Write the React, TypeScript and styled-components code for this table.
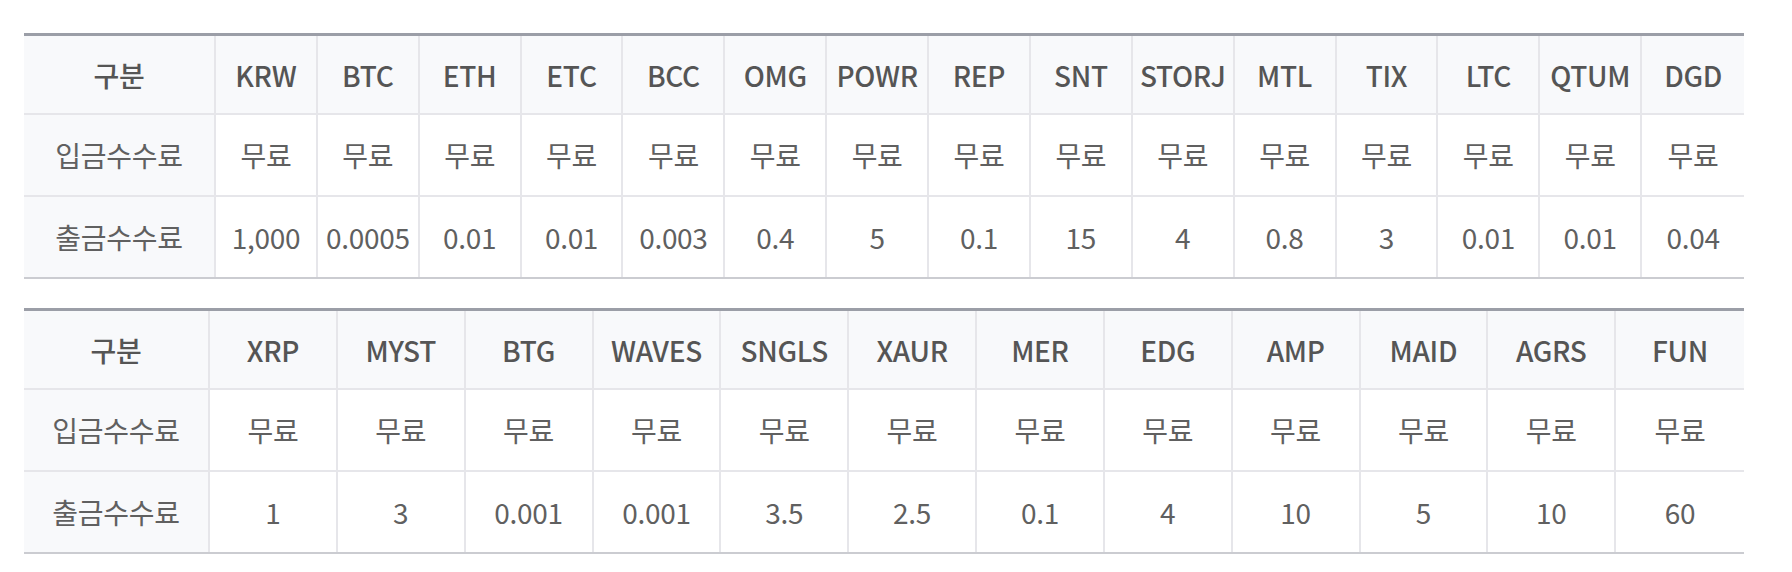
import React from "react";
import styled, { createGlobalStyle } from "styled-components";

const GlobalStyle = createGlobalStyle`
  html, body {
    margin: 0;
    padding: 0;
    background: #ffffff;
  }
  body {
    font-family: "Noto Sans CJK KR", "Noto Sans", sans-serif;
    color: #5e5e5e;
  }
`;

const Page = styled.div`
  display: flex;
  flex-direction: column;
  gap: 29px;
  width: 1720px;
  padding: 33px 0 0 24px;
`;

const Table = styled.div<{ $first: number; $count: number }>`
  display: grid;
  grid-template-columns: ${(p) => p.$first}px repeat(${(p) => p.$count}, 1fr);
  border-top: 3px solid #9b9ea7;
  border-bottom: 2px solid #cbccd1;
`;

const Cell = styled.div<{ $head?: boolean; $label?: boolean; $last?: boolean; $bottom?: boolean }>`
  box-sizing: border-box;
  display: flex;
  align-items: center;
  justify-content: center;
  height: ${(p) => (p.$head ? 79 : p.$bottom ? 80 : 82)}px;
  padding-top: ${(p) => (p.$head ? 1 : 0)}px;
  border-right: ${(p) => (p.$last ? "none" : "2px solid #e6e6ea")};
  border-bottom: ${(p) => (p.$bottom ? "none" : "2px solid #e6e6ea")};
  background: ${(p) => (p.$head || p.$label ? "#f8f9fb" : "#ffffff")};
  font-size: 28px;
  font-weight: ${(p) => (p.$head ? 500 : 400)};
  color: ${(p) => (p.$head ? "#555555" : "#606060")};
  white-space: nowrap;
  letter-spacing: -0.3px;
`;

type FeeTable = {
  first: number;
  coins: string[];
  withdraw: string[];
};

const tables: FeeTable[] = [
  {
    first: 192,
    coins: ["KRW", "BTC", "ETH", "ETC", "BCC", "OMG", "POWR", "REP", "SNT", "STORJ", "MTL", "TIX", "LTC", "QTUM", "DGD"],
    withdraw: ["1,000", "0.0005", "0.01", "0.01", "0.003", "0.4", "5", "0.1", "15", "4", "0.8", "3", "0.01", "0.01", "0.04"],
  },
  {
    first: 186,
    coins: ["XRP", "MYST", "BTG", "WAVES", "SNGLS", "XAUR", "MER", "EDG", "AMP", "MAID", "AGRS", "FUN"],
    withdraw: ["1", "3", "0.001", "0.001", "3.5", "2.5", "0.1", "4", "10", "5", "10", "60"],
  },
];

function FeeGrid({ t }: { t: FeeTable }) {
  const n = t.coins.length;
  return (
    <Table $first={t.first} $count={n} role="table">
      <Cell $head>구분</Cell>
      {t.coins.map((c, i) => (
        <Cell $head key={"h" + c} $last={i === n - 1}>
          {c}
        </Cell>
      ))}
      <Cell $label>입금수수료</Cell>
      {t.coins.map((c, i) => (
        <Cell key={"d" + c} $last={i === n - 1}>
          무료
        </Cell>
      ))}
      <Cell $label $bottom>
        출금수수료
      </Cell>
      {t.withdraw.map((w, i) => (
        <Cell key={"w" + i} $bottom $last={i === n - 1}>
          {w}
        </Cell>
      ))}
    </Table>
  );
}

export default function App() {
  return (
    <>
      <GlobalStyle />
      <Page>
        {tables.map((t, i) => (
          <FeeGrid key={i} t={t} />
        ))}
      </Page>
    </>
  );
}
